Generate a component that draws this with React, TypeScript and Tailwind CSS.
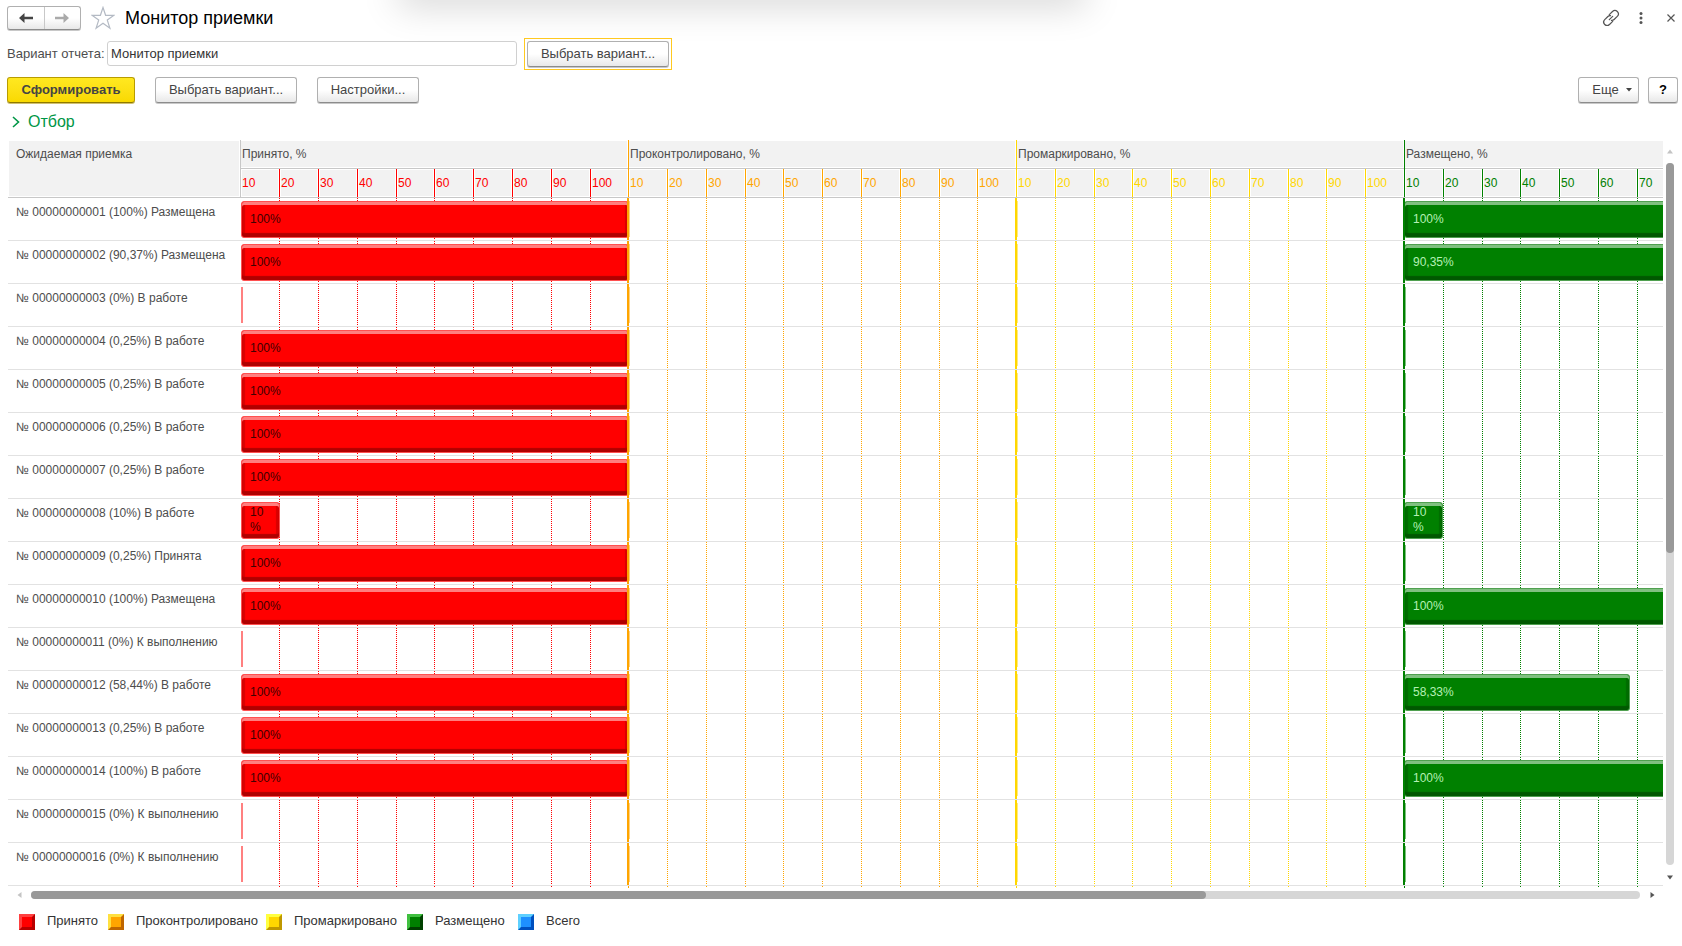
import { ReactNode } from 'react';

type Group = {
  key: string;
  title: string;
  tone: string;
  edge: string;
  headEdge: string;
  tick: string;
  cols: string;
  dots: string;
};

const COLS_A = 'grid-cols-[39px_39px_39px_39px_38px_39px_39px_39px_39px_38px]';
const COLS_B = 'grid-cols-[39px_39px_39px_38px_39px_39px_39px_39px_38px_39px]';
const COLS_C = 'grid-cols-[39px_39px_38px_39px_39px_39px_39px_38px_39px_39px]';

const groups: Group[] = [
  {
    key: 'accepted',
    title: 'Принято, %',
    tone: 'text-[#ff0000]',
    edge: 'bg-transparent',
    headEdge: 'border-[#c8c8c8]',
    tick: 'border-[#ff0000]',
    cols: COLS_A,
    dots: 'bg-[repeating-linear-gradient(to_bottom,#ff0000_0_1px,transparent_1px_2px)]',
  },
  {
    key: 'controlled',
    title: 'Проконтролировано, %',
    tone: 'text-[#ffa500]',
    edge: 'bg-[#ffa500]',
    headEdge: 'border-[#ffa500]',
    tick: 'border-[#ffa500]',
    cols: COLS_B,
    dots: 'bg-[repeating-linear-gradient(to_bottom,#ffa500_0_1px,transparent_1px_2px)]',
  },
  {
    key: 'marked',
    title: 'Промаркировано, %',
    tone: 'text-[#ffd700]',
    edge: 'bg-[#ffd700]',
    headEdge: 'border-[#ffd700]',
    tick: 'border-[#ffd700]',
    cols: COLS_C,
    dots: 'bg-[repeating-linear-gradient(to_bottom,#ffd700_0_1px,transparent_1px_2px)]',
  },
  {
    key: 'placed',
    title: 'Размещено, %',
    tone: 'text-[#008000]',
    edge: 'bg-[#008000]',
    headEdge: 'border-[#008000]',
    tick: 'border-[#008000]',
    cols: COLS_C,
    dots: 'bg-[repeating-linear-gradient(to_bottom,#008000_0_1px,transparent_1px_2px)]',
  },
];

type Row = { label: string; accepted: number; placed: number; placedText?: string };

const rows: Row[] = [
  { label: '№ 00000000001 (100%) Размещена', accepted: 100, placed: 100 },
  { label: '№ 00000000002 (90,37%) Размещена', accepted: 100, placed: 90.35, placedText: '90,35%' },
  { label: '№ 00000000003 (0%) В работе', accepted: 0, placed: 0 },
  { label: '№ 00000000004 (0,25%) В работе', accepted: 100, placed: 0 },
  { label: '№ 00000000005 (0,25%) В работе', accepted: 100, placed: 0 },
  { label: '№ 00000000006 (0,25%) В работе', accepted: 100, placed: 0 },
  { label: '№ 00000000007 (0,25%) В работе', accepted: 100, placed: 0 },
  { label: '№ 00000000008 (10%) В работе', accepted: 10, placed: 10 },
  { label: '№ 00000000009 (0,25%) Принята', accepted: 100, placed: 0 },
  { label: '№ 00000000010 (100%) Размещена', accepted: 100, placed: 100 },
  { label: '№ 00000000011 (0%) К выполнению', accepted: 0, placed: 0 },
  { label: '№ 00000000012 (58,44%) В работе', accepted: 100, placed: 58.33, placedText: '58,33%' },
  { label: '№ 00000000013 (0,25%) В работе', accepted: 100, placed: 0 },
  { label: '№ 00000000014 (100%) В работе', accepted: 100, placed: 100 },
  { label: '№ 00000000015 (0%) К выполнению', accepted: 0, placed: 0 },
  { label: '№ 00000000016 (0%) К выполнению', accepted: 0, placed: 0 },
];

const ticks = [10, 20, 30, 40, 50, 60, 70, 80, 90, 100];

const barLook: Record<string, string> = {
  accepted:
    'left-px bg-[#ff0000] text-[#400000] border-[#ff5050] shadow-[inset_0_3px_0_#ff7f7f,inset_0_-4px_1px_#b00000,inset_3px_0_1px_#d80000,inset_-3px_0_1px_#d80000]',
  placed:
    'left-0 bg-[#008000] text-[#b4f0b4] border-[#50a050] shadow-[inset_0_3px_0_#80c080,inset_0_-4px_1px_#005800,inset_3px_0_1px_#006c00,inset_-3px_0_1px_#006c00]',
};

const zeroLook: Record<string, string> = {
  accepted: 'w-[2px] bg-[#ff8080]',
  controlled: 'w-px bg-[#ffd280]',
  marked: 'w-px bg-[#ffeb80]',
  placed: 'w-px bg-[#80c080]',
};

function Bar({ kind, value, text }: { kind: string; value: number; text?: string }) {
  if (value === 0) {
    return <div className={`absolute top-[3px] left-px h-[36px] ${zeroLook[kind]}`} />;
  }
  return (
    <div
      className={`absolute top-[3px] flex h-[37px] items-center rounded-[3px] border pb-px pl-[8px] leading-[15px] ${barLook[kind]}`}
      style={{ width: `${value}%` }}
    >
      {value === 10 ? (
        <span>
          10
          <br />%
        </span>
      ) : (
        <span>{text ?? `${value}%`}</span>
      )}
    </div>
  );
}

function PlainButton({ children, className = '', label }: { children: ReactNode; className?: string; label?: string }) {
  return (
    <button
      type="button"
      aria-label={label}
      className={`flex h-[26px] items-center justify-center rounded-[3px] border border-[#b0b0b0] border-b-[#8c8c8c] bg-linear-to-b from-white from-50% to-[#e8e8e8] text-[13px] text-[#444] shadow-[0_1px_0_#c8c8c8] ${className}`}
    >
      {children}
    </button>
  );
}

function Arrow({ flip, color }: { flip?: boolean; color: string }) {
  return (
    <svg width="16" height="12" viewBox="0 0 16 12" className={flip ? 'rotate-180' : ''} aria-hidden="true">
      <path d="M1 6 6.500 1v3.700H15v2.600H6.500V11Z" fill={color} />
    </svg>
  );
}

const legend = [
  { name: 'Принято', look: 'bg-[#ff0000] border-t-[#ff4040] border-l-[#ff4040] border-r-[#b80000] border-b-[#b80000]', w: 'w-[89px]' },
  { name: 'Проконтролировано', look: 'bg-[#ffa500] border-t-[#ffe040] border-l-[#ffe040] border-r-[#bf6600] border-b-[#bf6600]', w: 'w-[158px]' },
  { name: 'Промаркировано', look: 'bg-[#ffd700] border-t-[#ffff40] border-l-[#ffff40] border-r-[#bf9800] border-b-[#bf9800]', w: 'w-[141px]' },
  { name: 'Размещено', look: 'bg-[#008000] border-t-[#40c040] border-l-[#40c040] border-r-[#004000] border-b-[#004000]', w: 'w-[111px]' },
  { name: 'Всего', look: 'bg-[#1e90ff] border-t-[#5ed0ff] border-l-[#5ed0ff] border-r-[#0050bf] border-b-[#0050bf]', w: 'w-[80px]' },
];

export default function App() {
  return (
    <div className="relative flex h-screen flex-col overflow-hidden bg-white font-['Liberation_Sans',Arial,sans-serif] text-[13px] text-[#4d4d4d]">
      <div className="pointer-events-none absolute -top-[20px] left-[404px] h-[20px] w-[676px] shadow-[0_0_36px_6px_rgba(0,0,0,0.17)]" />

      <header className="relative flex h-[36px] items-center pr-[6px] pl-[7px]">
        <div className="flex h-[24px] w-[74px] rounded-[3px] border border-[#b0b0b0] border-b-[#8c8c8c] bg-linear-to-b from-white from-50% to-[#e8e8e8] shadow-[0_1px_0_#c8c8c8]">
          <button type="button" aria-label="Назад" className="flex flex-1 items-center justify-center border-r border-[#c8c8c8]">
            <Arrow color="#444" />
          </button>
          <button type="button" aria-label="Вперед" className="flex flex-1 items-center justify-center">
            <Arrow flip color="#aaa" />
          </button>
        </div>
        <button type="button" aria-label="В избранное" className="ml-[10px]">
          <svg width="24" height="24" viewBox="0 0 24 24" fill="none" stroke="#b4bac4" strokeWidth="1.2" aria-hidden="true">
            <path d="m12 1.500 2.600 7.800H23l-6.700 4.800 2.600 8.100-6.900-5-6.900 5 2.600-8.100L1 9.300h8.400Z" />
          </svg>
        </button>
        <h1 className="ml-[10px] text-[18px] text-black">Монитор приемки</h1>
        <div className="ml-auto flex items-center text-[#555]">
          <button type="button" aria-label="Ссылка">
            <svg width="18" height="18" viewBox="0 0 18 18" fill="none" stroke="#555" strokeWidth="1.200" strokeLinecap="round" aria-hidden="true">
              <path d="M7.300 5.700 10.500 2.500a3.300 3.300 0 0 1 4.800 4.800l-3.200 3.200a3.200 3.200 0 0 1-2.600.9M10.700 12.300l-3.200 3.200a3.300 3.300 0 0 1-4.800-4.800l3.200-3.200a3.200 3.200 0 0 1 2.600-.9M7.300 10.700l3.400-3.400" />
            </svg>
          </button>
          <button type="button" aria-label="Меню" className="ml-[19px]">
            <svg width="4" height="12" viewBox="0 0 4 12" fill="#555" aria-hidden="true">
              <circle cx="2" cy="1.600" r="1.500" />
              <circle cx="2" cy="6" r="1.500" />
              <circle cx="2" cy="10.400" r="1.500" />
            </svg>
          </button>
          <button type="button" aria-label="Закрыть" className="ml-[23px]">
            <svg width="10" height="10" viewBox="0 0 10 10" stroke="#555" strokeWidth="1.200" aria-hidden="true">
              <path d="m1.500 1.500 7 7m0-7-7 7" />
            </svg>
          </button>
        </div>
      </header>

      <div className="relative flex h-[35px] items-center pl-[7px]">
        <label htmlFor="variant" className="w-[100px] whitespace-nowrap">
          Вариант отчета:
        </label>
        <input
          id="variant"
          defaultValue="Монитор приемки"
          className="h-[25px] w-[410px] rounded-[3px] border border-[#d0d0d0] bg-white px-[3px] text-[13px] text-[#333] outline-none"
        />
        <div className="ml-[7px] border border-[#ffc920] p-[2px]">
          <PlainButton className="w-[142px]">Выбрать вариант...</PlainButton>
        </div>
      </div>

      <div className="flex h-[37px] items-center pr-[4px] pl-[7px]">
        <button
          type="button"
          className="h-[26px] w-[128px] rounded-[3px] border border-[#b89c00] border-b-[#8f7900] bg-linear-to-b from-[#ffe820] to-[#f9d900] text-[13px] font-bold text-[#444] shadow-[0_1px_0_#d0c070]"
        >
          Сформировать
        </button>
        <PlainButton className="ml-[20px] w-[142px]">Выбрать вариант...</PlainButton>
        <PlainButton className="ml-[20px] w-[102px]">Настройки...</PlainButton>
        <PlainButton className="ml-auto w-[61px] gap-[7px] pl-[7px]">
          Еще
          <svg width="6" height="4" viewBox="0 0 6 4" fill="#444" aria-hidden="true">
            <path d="M0 0h6L3 3.500Z" />
          </svg>
        </PlainButton>
        <PlainButton className="ml-[9px] w-[30px] font-bold text-black" label="Справка">
          ?
        </PlainButton>
      </div>

      <div className="flex h-[32px] items-center pb-[4px] pl-[12px]">
        <button type="button" className="flex items-center gap-[8px] text-[16px] text-[#009646]">
          <svg width="8" height="12" viewBox="0 0 8 12" fill="none" stroke="#009646" strokeWidth="1.600" aria-hidden="true">
            <path d="m1 1 5.500 5L1 11" />
          </svg>
          Отбор
        </button>
      </div>

      <div className="flex h-[748px] shrink-0 pr-[8px] pl-[8px]">
        <div className="min-w-0 flex-1 overflow-auto [scrollbar-width:none]">
          <table className="w-[1784px] table-fixed border-separate border-spacing-0 text-left text-[12px] font-normal">
            <colgroup>
              <col className="w-[232px]" />
              {groups.map((g) => (
                <col key={g.key} className="w-[388px]" />
              ))}
            </colgroup>
            <thead>
              <tr className="h-[29px]">
                <th rowSpan={2} className="h-[58px] border-b border-[#c8c8c8] p-px align-top font-normal">
                  <div className="h-[55px] bg-[#f2f2f2] pt-[5px] pl-[7px] leading-[16px]">Ожидаемая приемка</div>
                </th>
                {groups.map((g) => (
                  <th key={g.key} className={`h-[29px] border-l p-0 font-normal ${g.headEdge}`}>
                    <div className="border-b border-[#c8c8c8] p-px pl-0">
                      <div className="h-[26px] bg-[#f2f2f2] pt-[5px] pl-px leading-[16px]">{g.title}</div>
                    </div>
                  </th>
                ))}
              </tr>
              <tr className="h-[29px]">
                {groups.map((g) => (
                  <th key={g.key} className={`h-[29px] p-0 font-normal ${g.tone}`}>
                    <div className={`grid h-[29px] border-b border-[#c8c8c8] ${g.cols}`}>
                      {ticks.map((t, i) => (
                        <div key={t} className={`border-l p-px ${i === 0 ? g.headEdge : g.tick}`}>
                          <div className="h-[26px] bg-[#f2f2f2] leading-[26px]">{t}</div>
                        </div>
                      ))}
                    </div>
                  </th>
                ))}
              </tr>
            </thead>
            <tbody>
              {rows.map((row) => (
                <tr key={row.label} className="h-[43px]">
                  <th scope="row" className="border-b border-[#e2e2e2] p-0 pt-[6px] pl-[8px] align-top leading-[16px] font-normal whitespace-nowrap">
                    {row.label}
                  </th>
                  {groups.map((g) => (
                    <td key={g.key} className="border-b border-[#e2e2e2] p-0">
                      <div className="relative h-[42px]">
                        <div className={`grid h-[42px] ${g.cols}`}>
                          {ticks.map((t, i) => (
                            <div key={t} className={`w-px ${i === 0 ? '' : g.dots}`} />
                          ))}
                        </div>
                        <div className={`absolute top-0 -left-px z-10 h-[42px] w-[2px] ${g.edge}`} />
                        {g.key === 'accepted' && <Bar kind="accepted" value={row.accepted} />}
                        {g.key === 'placed' && <Bar kind="placed" value={row.placed} text={row.placedText} />}
                        {(g.key === 'controlled' || g.key === 'marked') && <Bar kind={g.key} value={0} />}
                      </div>
                    </td>
                  ))}
                </tr>
              ))}
            </tbody>
            <tfoot aria-hidden="true">
              <tr>
                <td className="p-0" />
                {groups.map((g) => (
                  <td key={g.key} className="p-0">
                    <div className={`grid h-[2px] ${g.cols}`}>
                      {ticks.map((t, i) => (
                        <div key={t} className={`w-px ${i === 0 ? g.edge : g.dots}`} />
                      ))}
                    </div>
                  </td>
                ))}
              </tr>
            </tfoot>
          </table>
        </div>
        <div className="flex w-[11px] flex-col items-end pt-[9px]">
          <svg width="8" height="5" viewBox="0 0 8 5" fill="#c4c4c4" aria-hidden="true">
            <path d="M1 4.500 4 .5l3 4Z" />
          </svg>
          <div className="mt-[9px] h-[702px] w-[8px] rounded-full bg-[#d6d6d6]">
            <div className="h-[390px] rounded-full bg-[#999]" />
          </div>
          <svg width="8" height="5" viewBox="0 0 8 5" fill="#555" className="mt-[10px]" aria-hidden="true">
            <path d="M1 .5h6l-3 4Z" />
          </svg>
        </div>
      </div>

      <div className="flex h-[14px] items-center pr-[27px] pl-[17px]">
        <svg width="5" height="8" viewBox="0 0 5 8" fill="#c4c4c4" aria-hidden="true">
          <path d="M4.500 1v6l-4-3Z" />
        </svg>
        <div className="ml-[9px] h-[8px] flex-1 rounded-full bg-[#d6d6d6]">
          <div className="h-[8px] w-[73%] rounded-full bg-[#999]" />
        </div>
        <svg width="5" height="8" viewBox="0 0 5 8" fill="#555" className="ml-[10px]" aria-hidden="true">
          <path d="M.5 1v6l4-3Z" />
        </svg>
      </div>

      <ul className="flex pt-[10px] pl-[19px] text-[13px] text-[#333]">
        {legend.map((item) => (
          <li key={item.name} className={`flex items-start gap-[12px] ${item.w}`}>
            <span className={`mt-[2px] h-[16px] w-[16px] shrink-0 border-[3px] ${item.look}`} />
            <span className="leading-[18px]">{item.name}</span>
          </li>
        ))}
      </ul>
    </div>
  );
}
